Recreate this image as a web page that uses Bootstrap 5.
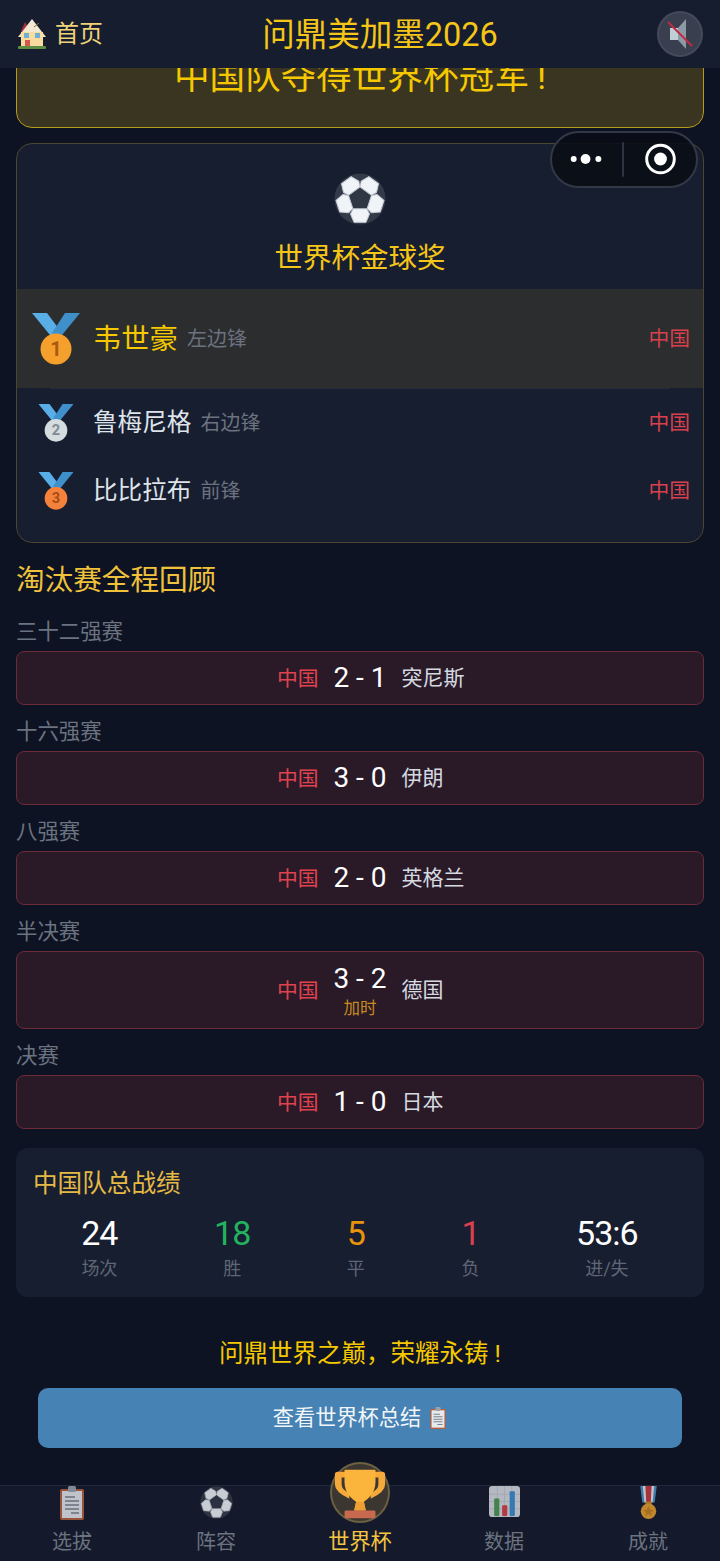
<!DOCTYPE html>
<html lang="zh-CN">
<head>
    <meta charset="UTF-8">
    <title>问鼎美加墨2026</title>
    <link href="https://cdn.jsdelivr.net/npm/bootstrap@5.3.3/dist/css/bootstrap.min.css" rel="stylesheet">
    <style>
        html, body { height: 100%; }
        body {
            background-color: #0d1322;
            font-family: Roboto, "Noto Sans CJK SC", sans-serif;
            overflow: hidden;
        }
        .svg-defs { position: absolute; }
        .app-shell { height: 1561px; position: relative; }
        .top-bar {
            height: 68px;
            padding: 0 17px 0 18px;
            background: #161d2e;
            z-index: 5;
        }
        .home-link { color: #f0d27a; font-size: 24px; text-decoration: none; gap: 9px; }
        .top-title { color: #f5c518; font-size: 32.5px; line-height: 1; padding-top: 2px; }
        .mute-btn {
            width: 46px; height: 46px;
            border-radius: 50%;
            background: #3a3f50;
            border: 2px solid #454a5a;
            padding: 0;
        }
        .page-scroll { height: 1417px; overflow: hidden; padding: 0 16px; }
        .champ-banner {
            margin-top: -41px;
            margin-bottom: 15px;
            padding: 24px 0 24px;
            background: #3a3520;
            border: 1px solid #b59a1c;
            border-radius: 16px;
            color: #f5c800;
            font-size: 35.6px;
            line-height: 51px;
            text-align: center;
        }
        .award-box {
            height: 400px;
            background: #171e30;
            border: 1px solid #4a4630;
            border-radius: 16px;
            overflow: hidden;
        }
        .award-head { height: 145px; padding-top: 29px; }
        .award-title { color: #f5c518; font-size: 28.5px; line-height: 40px; margin-top: 14px; }
        .rank-row { height: 68px; padding-right: 13px; }
        .rank-first { height: 99px; background: #2b2d2e; }
        .rank-sep { height: 1px; margin: 0 33px; background: #262d3e; }
        .medal-slot { width: 76px; padding-left: 2px; }
        .rank-name { color: #dfe3ea; font-size: 24.6px; }
        .rank-first .rank-name { color: #f5c800; font-size: 28.3px; margin-top: 3px; }
        .rank-pos { color: #6c7280; font-size: 20px; margin-left: 9px; }
        .rank-team { color: #d9404d; font-size: 20.8px; margin-top: 2px; }
        .section-title { color: #f0c23c; font-size: 28.6px; line-height: 40px; margin: 17px 0 19px; }
        .round-name { color: #6b7280; font-size: 21.4px; line-height: 26px; margin-bottom: 6px; }
        .match-line {
            height: 54px;
            margin-bottom: 14px;
            background: #2a1a28;
            border: 1px solid #6b2a38;
            border-radius: 8px;
        }
        .match-tall { height: 78px; }
        .team-left { flex: 1; text-align: right; color: #e0424f; font-size: 20.8px; padding-top: 3px; }
        .team-right { flex: 1; color: #d5d9e0; font-size: 21px; padding-top: 2px; }
        .score-wrap { width: 83px; text-align: center; color: #fff; font-size: 28px; line-height: 30px; }
        .extra-time { color: #c98a1e; font-size: 16.5px; line-height: 22px; margin: 4px 0 -4px; }
        .total-box {
            height: 149px;
            margin-top: 19px;
            padding: 18px 18px 0 17px;
            background: #171e30;
            border-radius: 12px;
        }
        .total-title { color: #e5b944; font-size: 24.6px; line-height: 36px; margin-bottom: 11px; }
        .stat-val { font-size: 34px; letter-spacing: -1px; line-height: 40px; color: #fff; }
        .stat-label { font-size: 18px; line-height: 32px; color: #5f6675; }
        .stat-win { color: #22b35e; }
        .stat-draw { color: #e8930c; }
        .stat-lose { color: #d9404d; }
        .closing-line { color: #f5c800; font-size: 24.5px; line-height: 40px; text-align: center; margin: 37px 0 14px; }
        .summary-btn {
            display: flex; align-items: center; justify-content: center; gap: 8px;
            width: 644px; height: 60px;
            margin: 0 auto;
            background: #4682b4;
            border: 0;
            border-radius: 10px;
            color: #f2f5f8;
            font-size: 21.2px;
        }
        .tab-bar {
            height: 76px;
            background: #141a2b;
            border-top: 1px solid #20283a;
        }
        .tab-item { width: 144px; color: #6b7280; font-size: 20px; line-height: 28px; position: relative; }
        .tab-icon { height: 42px; padding-top: 0; opacity: .82; }
        .tab-on { color: #f5c542; font-size: 21.2px; }
        .cup-ring {
            position: absolute; left: 42px; top: -24px;
            width: 60px; height: 61px;
            border-radius: 50%;
            background: #3b3630;
            border: 2px solid #6b6040;
        }
        .mini-capsule {
            position: absolute; left: 550px; top: 131px;
            width: 148px; height: 57px;
            border-radius: 29px;
            background: rgba(10, 13, 22, .9);
            border: 2px solid #333846;
            z-index: 6;
        }
    </style>
</head>
<body>
<svg width="0" height="0" class="svg-defs">
    <defs>
        <symbol id="ball" viewBox="0 0 52 52">
            <circle cx="26" cy="26" r="25.5" fill="#333a48"/>
            <polygon points="26,14.5 37,22.4 32.8,35.3 19.2,35.3 15,22.4" fill="#2f3745"/>
            <g fill="#f0f3f8" stroke="#c6ccd6" stroke-width="1" stroke-linejoin="round">
                <polygon id="ballPanel" points="19.2,35.8 32.8,35.8 35.5,41 32,49.3 20,49.3 16.5,41"/>
                <use href="#ballPanel" transform="rotate(72 26 26)"/>
                <use href="#ballPanel" transform="rotate(144 26 26)"/>
                <use href="#ballPanel" transform="rotate(216 26 26)"/>
                <use href="#ballPanel" transform="rotate(288 26 26)"/>
            </g>
        </symbol>
        <symbol id="clip" viewBox="0 0 28 34">
            <rect x="2" y="3" width="24" height="31" rx="2" fill="#b5603c"/>
            <rect x="4" y="5" width="20" height="27" fill="#e6e9ee"/>
            <rect x="10" y="0" width="8" height="6" rx="1.5" fill="#9aa3ad"/>
            <path d="M7 11 H17 M7 15 H21 M7 19 H21 M7 23 H21 M13 27 H21" stroke="#7a828d" stroke-width="1.6"/>
        </symbol>
        <symbol id="house" viewBox="0 0 28 30">
            <polygon points="3,12 7,3 10,8 6,15" fill="#a02c3c"/>
            <polygon points="14,0 28,18 0,18" fill="#f3e8d2"/>
            <rect x="3" y="13" width="22" height="15" fill="#fbdca0"/>
            <path d="M16 8 L21 4" stroke="#8d6a4a" stroke-width="1"/>
            <rect x="6" y="14" width="5" height="5" fill="#6db2d6"/>
            <rect x="17" y="14" width="5" height="5" fill="#6db2d6"/>
            <rect x="7" y="21" width="5" height="7" fill="#d8574c"/>
            <rect x="0" y="27" width="28" height="3" rx="1" fill="#5f8f42"/>
        </symbol>
        <symbol id="ribbon" viewBox="0 0 48 52">
            <polygon points="0,0 15,0 30,20 22,27" fill="#5aaee8"/>
            <polygon points="48,0 33,0 20,20 26,27" fill="#3f8fcb"/>
        </symbol>
    </defs>
</svg>

<div class="app-shell d-flex flex-column">
    <header class="top-bar d-flex align-items-center justify-content-between position-relative">
        <a href="#" class="home-link d-flex align-items-center">
            <svg width="28" height="30"><use href="#house"/></svg>
            <span>首页</span>
        </a>
        <div class="top-title">问鼎美加墨2026</div>
        <button class="mute-btn d-flex align-items-center justify-content-center" type="button" aria-label="静音">
            <svg width="30" height="34" viewBox="0 0 30 34">
                <polygon points="5,11 13,11 13,23 5,23" fill="#c0cfd5"/>
                <polygon points="13,11 21,2 21,32 13,23" fill="#8d9aa5"/>
                <path d="M3 5 L27 29" stroke="#c02a45" stroke-width="2"/>
            </svg>
        </button>
    </header>

    <main class="page-scroll">
        <div class="champ-banner">中国队夺得世界杯冠军&thinsp;!</div>

        <section class="award-box">
            <div class="award-head text-center">
                <svg class="d-block mx-auto" width="52" height="52"><use href="#ball"/></svg>
                <div class="award-title">世界杯金球奖</div>
            </div>
            <div class="rank-row rank-first d-flex align-items-center">
                <div class="medal-slot d-flex justify-content-center">
                    <svg width="50" height="52" viewBox="0 0 48 52">
                        <use href="#ribbon"/>
                        <circle cx="24" cy="36" r="15.5" fill="#f5a02c"/>
                        <text x="24" y="43" text-anchor="middle" font-size="20" font-weight="700" fill="#a85a10" font-family="Roboto">1</text>
                    </svg>
                </div>
                <span class="rank-name">韦世豪</span>
                <span class="rank-pos">左边锋</span>
                <span class="rank-team ms-auto">中国</span>
            </div>
            <div class="rank-sep"></div>
            <div class="rank-row d-flex align-items-center">
                <div class="medal-slot d-flex justify-content-center">
                    <svg width="36" height="38" viewBox="0 0 48 52">
                        <use href="#ribbon"/>
                        <circle cx="24" cy="36" r="15.5" fill="#d5dce0"/>
                        <text x="24" y="43" text-anchor="middle" font-size="20" font-weight="700" fill="#7e8b92" font-family="Roboto">2</text>
                    </svg>
                </div>
                <span class="rank-name">鲁梅尼格</span>
                <span class="rank-pos">右边锋</span>
                <span class="rank-team ms-auto">中国</span>
            </div>
            <div class="rank-row d-flex align-items-center">
                <div class="medal-slot d-flex justify-content-center">
                    <svg width="36" height="38" viewBox="0 0 48 52">
                        <use href="#ribbon"/>
                        <circle cx="24" cy="36" r="15.5" fill="#f5823a"/>
                        <text x="24" y="43" text-anchor="middle" font-size="20" font-weight="700" fill="#a84a18" font-family="Roboto">3</text>
                    </svg>
                </div>
                <span class="rank-name">比比拉布</span>
                <span class="rank-pos">前锋</span>
                <span class="rank-team ms-auto">中国</span>
            </div>
        </section>

        <h2 class="section-title fw-normal">淘汰赛全程回顾</h2>

        <div class="round-name">三十二强赛</div>
        <div class="match-line d-flex align-items-center">
            <div class="team-left">中国</div>
            <div class="score-wrap">2 - 1</div>
            <div class="team-right">突尼斯</div>
        </div>
        <div class="round-name">十六强赛</div>
        <div class="match-line d-flex align-items-center">
            <div class="team-left">中国</div>
            <div class="score-wrap">3 - 0</div>
            <div class="team-right">伊朗</div>
        </div>
        <div class="round-name">八强赛</div>
        <div class="match-line d-flex align-items-center">
            <div class="team-left">中国</div>
            <div class="score-wrap">2 - 0</div>
            <div class="team-right">英格兰</div>
        </div>
        <div class="round-name">半决赛</div>
        <div class="match-line match-tall d-flex align-items-center">
            <div class="team-left">中国</div>
            <div class="score-wrap">3 - 2<div class="extra-time">加时</div></div>
            <div class="team-right">德国</div>
        </div>
        <div class="round-name">决赛</div>
        <div class="match-line d-flex align-items-center">
            <div class="team-left">中国</div>
            <div class="score-wrap">1 - 0</div>
            <div class="team-right">日本</div>
        </div>

        <section class="total-box">
            <div class="total-title">中国队总战绩</div>
            <div class="d-flex justify-content-around text-center">
                <div><div class="stat-val">24</div><div class="stat-label">场次</div></div>
                <div><div class="stat-val stat-win">18</div><div class="stat-label">胜</div></div>
                <div><div class="stat-val stat-draw">5</div><div class="stat-label">平</div></div>
                <div><div class="stat-val stat-lose">1</div><div class="stat-label">负</div></div>
                <div><div class="stat-val">53:6</div><div class="stat-label">进/失</div></div>
            </div>
        </section>

        <div class="closing-line">问鼎世界之巅，荣耀永铸 !</div>
        <button class="summary-btn" type="button">
            查看世界杯总结
            <svg width="18" height="22"><use href="#clip"/></svg>
        </button>
    </main>

    <nav class="tab-bar d-flex text-center">
        <div class="tab-item">
            <div class="tab-icon"><svg width="28" height="34"><use href="#clip"/></svg></div>
            选拔
        </div>
        <div class="tab-item">
            <div class="tab-icon"><svg width="33" height="33"><use href="#ball"/></svg></div>
            阵容
        </div>
        <div class="tab-item tab-on">
            <div class="cup-ring d-flex align-items-center justify-content-center">
                <svg class="flex-shrink-0" width="60" height="62" viewBox="0 0 62 62">
                    <path d="M16 9 H8 Q5 9 5 12 V22 Q5 30 20 37 V31 Q12 28 12 22 V15 H16 Z" fill="#f5a93a"/>
                    <path d="M46 9 H54 Q57 9 57 12 V22 Q57 30 42 37 V31 Q50 28 50 22 V15 H46 Z" fill="#f5a93a"/>
                    <path d="M15 7 H47 V20 C47 32 38 38 35 40 L37 49 H25 L27 40 C24 38 15 32 15 20 Z" fill="#fbb53d"/>
                    <path d="M27 40 H35 L37 49 H25 Z" fill="#eea035"/>
                    <rect x="15" y="49" width="32" height="8" rx="1.5" fill="#c8694f"/>
                </svg>
            </div>
            <div class="tab-icon"></div>
            世界杯
        </div>
        <div class="tab-item">
            <div class="tab-icon">
                <svg width="31" height="31" viewBox="0 0 30 30">
                    <rect width="30" height="30" rx="3" fill="#d6dbe2"/>
                    <path d="M0 8 H30 M0 15 H30 M0 22 H30 M8 0 V30 M15 0 V30 M22 0 V30" stroke="#c4cad3" stroke-width="1"/>
                    <rect x="5" y="12" width="5" height="17" rx="1" fill="#4f9a55"/>
                    <rect x="12.7" y="18.7" width="5" height="10.3" rx="1" fill="#d8434a"/>
                    <rect x="20" y="5" width="5" height="24" rx="1" fill="#3d8ed0"/>
                </svg>
            </div>
            数据
        </div>
        <div class="tab-item">
            <div class="tab-icon">
                <svg width="17" height="33" viewBox="0 0 16 32">
                    <polygon points="0,0 16,0 14,16 2,16" fill="#4a90c8"/>
                    <polygon points="2.5,0 13.5,0 12,16 4,16" fill="#e8e8ec"/>
                    <polygon points="5,0 11,0 10.2,16 5.8,16" fill="#c8383e"/>
                    <rect x="5" y="15" width="6" height="3" fill="#c98a24"/>
                    <circle cx="8" cy="24.5" r="7.5" fill="#e8a030"/>
                    <polygon points="8,19.5 9.6,23 13,23.3 10.4,25.6 11.2,29 8,27.2 4.8,29 5.6,25.6 3,23.3 6.4,23" fill="#c9821f"/>
                </svg>
            </div>
            成就
        </div>
    </nav>

    <div class="mini-capsule d-flex align-items-center">
        <svg width="146" height="53" viewBox="0 0 146 53">
            <circle cx="22" cy="26" r="3" fill="#fff"/>
            <circle cx="34" cy="26" r="5" fill="#fff"/>
            <circle cx="47" cy="26" r="3" fill="#fff"/>
            <path d="M72 9 V44" stroke="#3d4250" stroke-width="1.5"/>
            <circle cx="110" cy="26" r="14" fill="none" stroke="#fff" stroke-width="3"/>
            <circle cx="110" cy="26" r="6.5" fill="#fff"/>
        </svg>
    </div>
</div>
</body>
</html>
